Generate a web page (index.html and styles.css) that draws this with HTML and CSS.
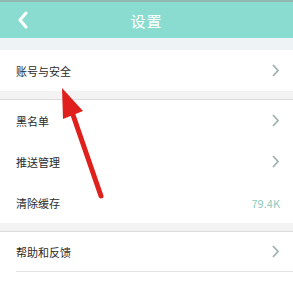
FILE: index.html
```html
<!DOCTYPE html>
<html lang="zh-CN">

<head>
    <meta charset="UTF-8">
    <meta name="viewport" content="width=device-width, initial-scale=1.0">
    <title>设置</title>
    <link rel="stylesheet" href="styles.css">
</head>

<body>
    <div class="header">
        <svg class="back" width="12" height="18" viewBox="0 0 12 18">
            <polyline points="9,2 3,9 9,16" fill="none" stroke="#fff" stroke-width="3" stroke-linecap="round" stroke-linejoin="round" />
        </svg>
        <span class="title">设置</span>
    </div>
    <div class="band"></div>

    <div class="group">
        <div class="row first">
            <span>账号与安全</span>
            <svg class="more" width="9" height="13" viewBox="0 0 9 13"><polyline points="2,1 7,6.5 2,12" fill="none" stroke="#9fb3b0" stroke-width="1.8" /></svg>
        </div>
    </div>

    <div class="gap"></div>

    <div class="group">
        <div class="row">
            <span>黑名单</span>
            <svg class="more" width="9" height="13" viewBox="0 0 9 13"><polyline points="2,1 7,6.5 2,12" fill="none" stroke="#9fb3b0" stroke-width="1.8" /></svg>
        </div>
        <div class="row">
            <span>推送管理</span>
            <svg class="more" width="9" height="13" viewBox="0 0 9 13"><polyline points="2,1 7,6.5 2,12" fill="none" stroke="#9fb3b0" stroke-width="1.8" /></svg>
        </div>
        <div class="row last">
            <span>清除缓存</span>
            <span class="size">79.4K</span>
        </div>
    </div>

    <div class="gap"></div>

    <div class="group">
        <div class="row line">
            <span>帮助和反馈</span>
            <svg class="more" width="9" height="13" viewBox="0 0 9 13"><polyline points="2,1 7,6.5 2,12" fill="none" stroke="#9fb3b0" stroke-width="1.8" /></svg>
        </div>
        <div class="row tail"></div>
    </div>

    <!-- 红色箭头标注 -->
    <svg class="mark" width="293" height="283" viewBox="0 0 293 283">
        <line x1="72" y1="112" x2="101" y2="196" stroke="#e0201c" stroke-width="5" stroke-linecap="round" />
        <polygon points="62,88 63,119 83,111" fill="#e0201c" />
    </svg>
</body>

</html>
```

FILE: styles.css
```css
* {
    margin: 0;
    padding: 0;
}

body {
    position: relative;
    width: 293px;
    height: 283px;
    overflow: hidden;
    background: #fff;
    font-family: "Noto Sans CJK SC", "Noto Sans", sans-serif;
    color: #2b2b2b;
}

.header {
    height: 36px;
    border-top: 2px solid #8fb8b2;
    background: #8adcd0;
    display: flex;
    align-items: center;
    justify-content: center;
    position: relative;
}

.header .back {
    position: absolute;
    left: 17px;
    top: 9px;
}

.header .title {
    color: #fff;
    font-size: 15px;
    letter-spacing: 1px;
}

.band {
    height: 12px;
    background: #eef3f6;
}

.group {
    background: #fff;
}

.row {
    height: 41px;
    display: flex;
    align-items: center;
    justify-content: space-between;
    padding: 0 13px 0 16px;
    font-size: 11px;
}

.row.first {
    height: 41px;
}

.row.line {
    height: 39px;
    border-bottom: 1px solid #e4e4e4;
    margin-left: 16px;
    padding-left: 0;
}

.row.tail {
    height: 11px;
}

.row .size {
    color: #8ccabd;
    font-size: 11px;
}

.gap {
    height: 8px;
    background: #f3f3f3;
    border-bottom: 1px solid #dcdcdc;
}

.mark {
    position: absolute;
    left: 0;
    top: 0;
}
```
